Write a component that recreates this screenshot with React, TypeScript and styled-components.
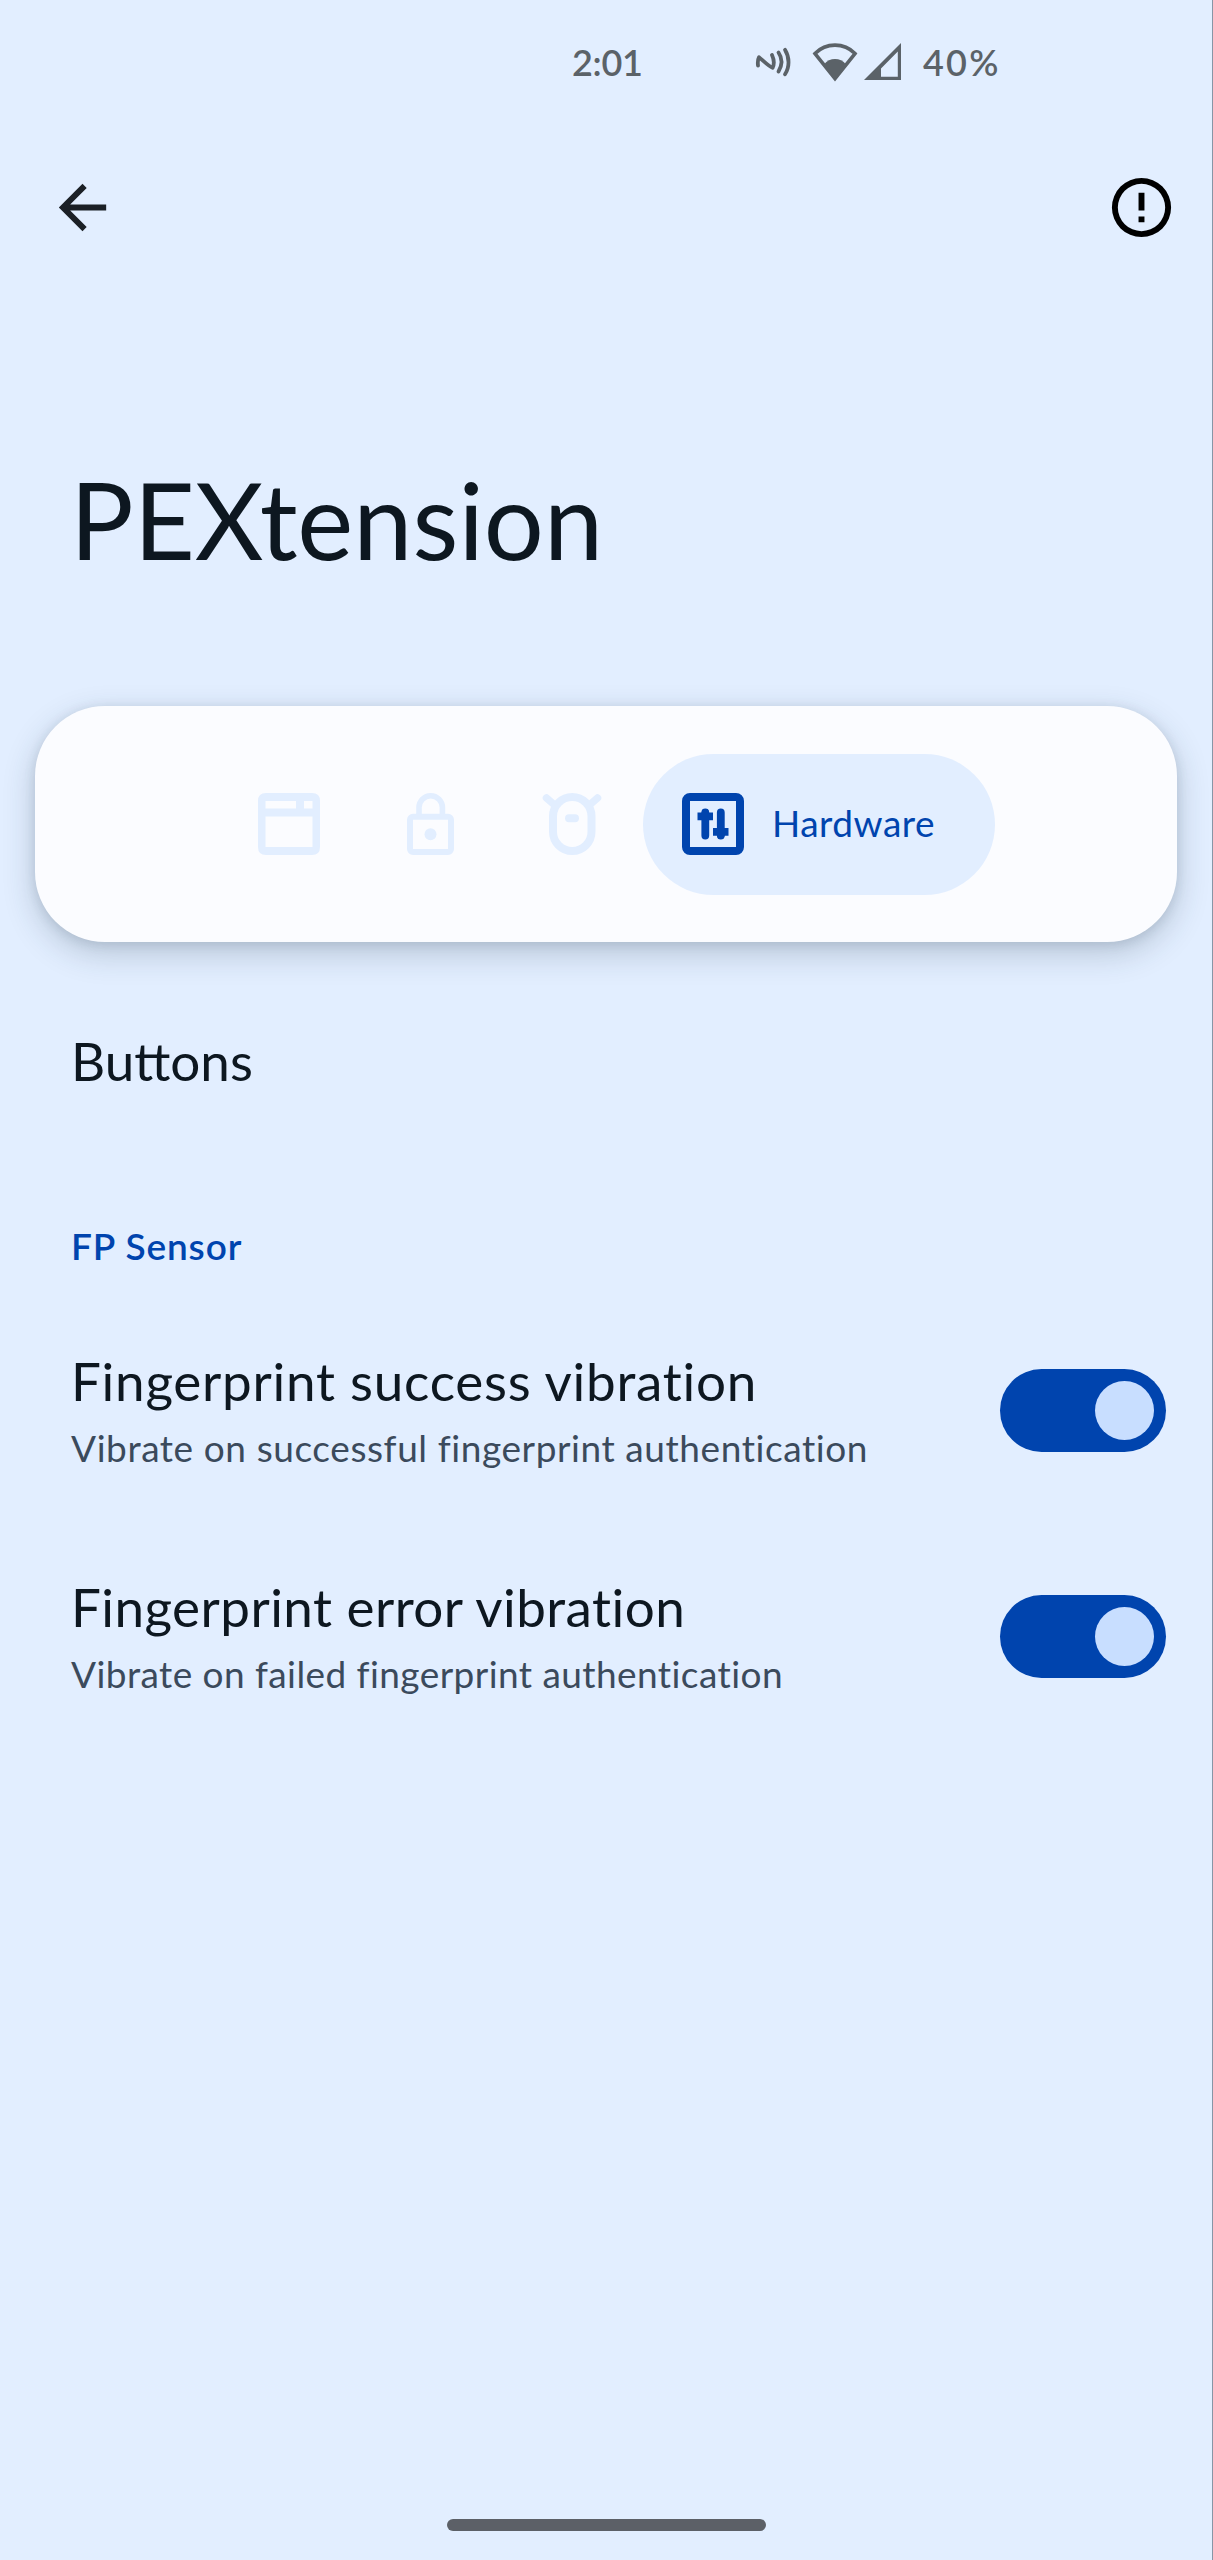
import React from "react";
import styled, { createGlobalStyle } from "styled-components";

const color = {
  background: "#e2eeff",
  surface: "#fbfcff",
  text: "#0d1720",
  secondary: "#3b4a5c",
  accent: "#0044ae",
  thumb: "#c8deff",
  status: "#5b6268",
};

const GlobalStyle = createGlobalStyle`
  body {
    margin: 0;
    background: ${color.background};
    font-family: Lato, "Open Sans", sans-serif;
    color: ${color.text};
  }
`;

const Screen = styled.div`
  box-sizing: border-box;
  width: 1213px;
  height: 2560px;
  display: flex;
  flex-direction: column;
  overflow: hidden;
  background: ${color.background};
  border-right: 1px solid #8795a6;
`;

const StatusBar = styled.header`
  display: flex;
  align-items: center;
  height: 124px;
  padding-left: 572px;
  color: ${color.status};
`;

const StatusText = styled.span<{ $width: number; $tracking: number }>`
  width: ${(p) => p.$width}px;
  font-size: 36px;
  font-weight: 600;
  letter-spacing: ${(p) => p.$tracking}px;
  white-space: nowrap;
`;

const StatusIcons = styled.div`
  display: flex;
  align-items: center;
  width: 169px;
  height: 52px;
`;

const Spacer = styled.span<{ $width: number }>`
  width: ${(p) => p.$width}px;
`;

const AppBar = styled.nav`
  display: flex;
  align-items: center;
  justify-content: space-between;
  height: 167px;
  padding: 0 35px 0 47px;
`;

const IconButton = styled.button`
  display: flex;
  padding: 0;
  border: 0;
  background: none;
  color: inherit;
`;

const PageTitle = styled.h1`
  margin: 163px 0 0 70px;
  font-size: 106px;
  font-weight: 400;
  line-height: 130px;
  letter-spacing: 0;
`;

const TabCard = styled.div`
  display: flex;
  align-items: center;
  flex-shrink: 0;
  box-sizing: border-box;
  height: 236px;
  margin: 122px 35px 0;
  padding-left: 223px;
  border-radius: 70px;
  background: ${color.surface};
  box-shadow: 0 11px 32px rgba(35, 55, 75, 0.23), 0 2px 12px rgba(35, 55, 75, 0.12);
`;

const Tab = styled.button<{ $width: number }>`
  display: flex;
  width: ${(p) => p.$width}px;
  padding: 0;
  border: 0;
  background: none;
  color: ${color.background};
`;

const ActiveTab = styled.button`
  display: flex;
  align-items: center;
  gap: 28px;
  box-sizing: border-box;
  width: 352px;
  height: 141px;
  padding: 0 0 0 39px;
  border: 0;
  border-radius: 71px;
  background: ${color.background};
  color: ${color.accent};
  font: 400 37px Lato, sans-serif;
  letter-spacing: 0.5px;
`;

const TabLabel = styled.span`
  padding-bottom: 3px;
`;

const MenuItem = styled.div`
  margin: 79px 0 0 71px;
  font-size: 53px;
  line-height: 80px;
  letter-spacing: 0;
`;

const SectionLabel = styled.h2`
  margin: 120px 0 26px 71px;
  font-size: 37px;
  font-weight: 600;
  line-height: 50px;
  letter-spacing: 0.9px;
  color: ${color.accent};
`;

const Preference = styled.section`
  display: flex;
  align-items: center;
  justify-content: space-between;
  height: 226px;
  padding: 0 46px 0 71px;
`;

const PreferenceText = styled.div`
  padding-top: 8px;
  white-space: nowrap;
  font-variant-ligatures: none;
`;

const PreferenceTitle = styled.div<{ $tracking: number }>`
  font-size: 53px;
  line-height: 68px;
  letter-spacing: ${(p) => p.$tracking}px;
`;

const PreferenceSummary = styled.div<{ $tracking: number }>`
  font-size: 37px;
  line-height: 66px;
  letter-spacing: ${(p) => p.$tracking}px;
  color: ${color.secondary};
`;

const Switch = styled.button`
  display: flex;
  align-items: center;
  justify-content: flex-end;
  box-sizing: border-box;
  width: 166px;
  height: 83px;
  padding: 0 12px;
  border: 0;
  border-radius: 42px;
  background: ${color.accent};
`;

const Thumb = styled.span`
  width: 59px;
  height: 59px;
  border-radius: 50%;
  background: ${color.thumb};
`;

const GestureBar = styled.div`
  width: 319px;
  height: 12px;
  margin: auto 0 29px 447px;
  border-radius: 6px;
  background: #5c6067;
`;

const NfcIcon = () => (
  <svg width="46" height="40" viewBox="0 0 46 40" fill="none" stroke="currentColor" strokeWidth="3.8" strokeLinecap="round">
    <path d="M4 23.5C3.6 20 4 17 5 15.2C8 17.5 14 24 18.6 25.8C20.3 22.5 20 17.5 18 13" strokeLinejoin="round" />
    <path d="M24.5 10.5C28.3 16 28.3 23 24.5 29.5" />
    <path d="M31 7.8C35.7 15.5 35.7 25 31 32.3" />
  </svg>
);

const WifiIcon = () => (
  <svg width="46" height="40" viewBox="0 0 46 40">
    <path d="M3 11.5C14 .3 32 .3 43 11.5L23 36.5Z" fill="none" stroke="currentColor" strokeWidth="3.6" strokeLinejoin="miter" />
    <path d="M12 22.5C17.5 15.2 28.5 15.2 34 22.5L23 38Z" fill="currentColor" />
  </svg>
);

const SignalIcon = () => (
  <svg width="38" height="38" viewBox="0 0 38 38">
    <path d="M37 0V37H0ZM33.8 8.6L17 25.5V33.8H33.8Z" fill="currentColor" fillRule="evenodd" />
  </svg>
);

const BackIcon = () => (
  <svg width="71" height="71" viewBox="0 0 24 24" fill="#1b2026">
    <path d="M20 11H7.83l5.59-5.59L12 4l-8 8 8 8 1.41-1.41L7.83 13H20v-2z" />
  </svg>
);

const InfoIcon = () => (
  <svg width="71" height="71" viewBox="0 0 24 24" fill="#000">
    <path d="M11 15h2v2h-2zm0-8h2v6h-2zm1-5a10 10 0 1 0 0 20 10 10 0 0 0 0-20zm0 18a8 8 0 1 1 0-16 8 8 0 0 1 0 16z" />
  </svg>
);

const WindowIcon = () => (
  <svg width="62" height="62" viewBox="0 0 62 62">
    <path
      d="M8 0H54Q62 0 62 8V54Q62 62 54 62H8Q0 62 0 54V8Q0 0 8 0ZM7.5 8V15.5H38V8ZM46 8V15.5H54.5V8ZM7.5 23.5V54H54.5V23.5Z"
      fill="currentColor"
      fillRule="evenodd"
    />
  </svg>
);

const LockIcon = () => (
  <svg width="47" height="62" viewBox="0 0 47 62" fill="none" stroke="currentColor">
    <rect x="3" y="23.7" width="41" height="35.3" rx="3" strokeWidth="6" />
    <path d="M12 22V14.5A11.7 11.7 0 0 1 35.4 14.5V22" strokeWidth="5.6" />
    <circle cx="23.5" cy="41.3" r="6" fill="currentColor" stroke="none" />
  </svg>
);

const CreatureIcon = () => (
  <svg width="60" height="62" viewBox="0 0 60 62" fill="none" stroke="currentColor" strokeWidth="8" strokeLinecap="round">
    <rect x="11" y="4" width="38.5" height="54" rx="19.25" />
    <path d="M4.5 5L12 11.5M55.5 5L48 11.5" strokeWidth="7.5" />
    <path d="M27 25.3H33" />
  </svg>
);

const HardwareIcon = () => (
  <svg width="62" height="62" viewBox="0 0 62 62" fill="none" stroke="currentColor">
    <rect x="4" y="4" width="54" height="54" rx="4" strokeWidth="8" />
    <g strokeWidth="7.8" strokeLinecap="round">
      <path d="M23.3 19.5V42.5M38.8 19.5V42.5" />
    </g>
    <g fill="currentColor" stroke="none">
      <path d="M15.5 19.5H19.5L21 16H25.5L27.2 19.5H31V27.2H15.5Z" />
      <path d="M31 35H46.5V42.7H42.7L41 46H36.5L35 42.7H31Z" />
    </g>
  </svg>
);

const preferences = [
  {
    title: "Fingerprint success vibration",
    titleTracking: 0.75,
    summary: "Vibrate on successful fingerprint authentication",
    summaryTracking: 0.58,
  },
  {
    title: "Fingerprint error vibration",
    titleTracking: 0.45,
    summary: "Vibrate on failed fingerprint authentication",
    summaryTracking: 0.43,
  },
];

export default function App() {
  return (
    <>
      <GlobalStyle />
      <Screen>
        <StatusBar>
          <StatusText $width={182} $tracking={-0.3}>2:01</StatusText>
          <StatusIcons>
            <NfcIcon />
            <Spacer $width={12} />
            <WifiIcon />
            <Spacer $width={6} />
            <SignalIcon />
          </StatusIcons>
          <StatusText $width={90} $tracking={2.2}>40%</StatusText>
        </StatusBar>
        <AppBar>
          <IconButton aria-label="Back"><BackIcon /></IconButton>
          <IconButton aria-label="About"><InfoIcon /></IconButton>
        </AppBar>
        <PageTitle>PEXtension</PageTitle>
        <TabCard>
          <Tab $width={149}><WindowIcon /></Tab>
          <Tab $width={135}><LockIcon /></Tab>
          <Tab $width={101}><CreatureIcon /></Tab>
          <ActiveTab>
            <HardwareIcon />
            <TabLabel>Hardware</TabLabel>
          </ActiveTab>
        </TabCard>
        <MenuItem>Buttons</MenuItem>
        <SectionLabel>FP Sensor</SectionLabel>
        {preferences.map((item) => (
          <Preference key={item.title}>
            <PreferenceText>
              <PreferenceTitle $tracking={item.titleTracking}>{item.title}</PreferenceTitle>
              <PreferenceSummary $tracking={item.summaryTracking}>{item.summary}</PreferenceSummary>
            </PreferenceText>
            <Switch role="switch" aria-checked="true" aria-label={item.title}>
              <Thumb />
            </Switch>
          </Preference>
        ))}
        <GestureBar />
      </Screen>
    </>
  );
}
